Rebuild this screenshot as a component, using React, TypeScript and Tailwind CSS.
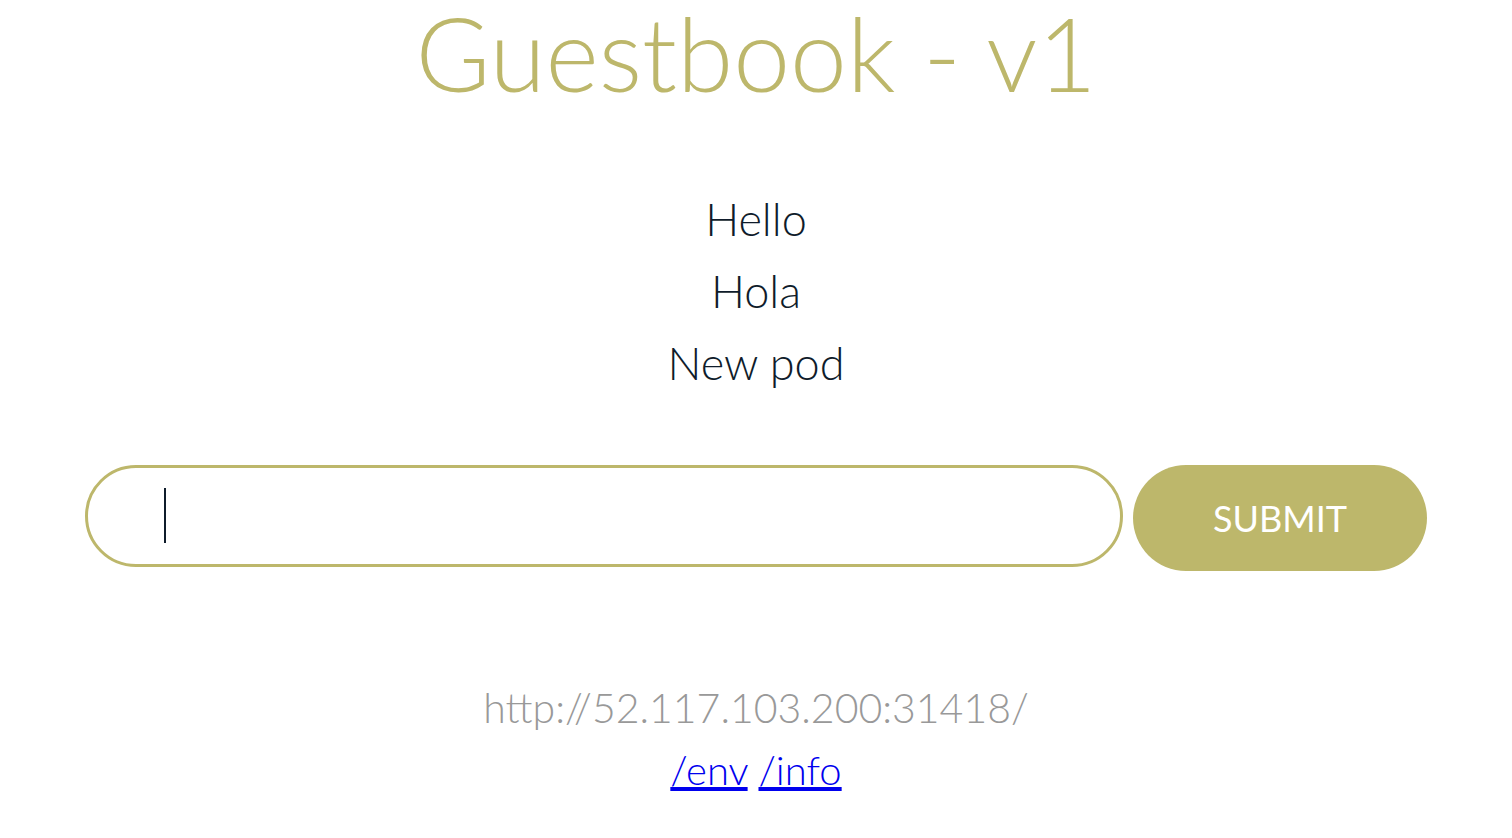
import React, { useState } from 'react';

const messages = ['Hello', 'Hola', 'New pod'];

const App: React.FC = () => {
  const [entry, setEntry] = useState('');

  return (
    <div className="min-h-screen bg-white text-center font-['Lato','Open_Sans',sans-serif]">
      <h1 className="pt-[3px] text-[102px] leading-[100px] font-light text-[#bdb76b]">Guestbook - v1</h1>

      <div className="mt-[80px] flex flex-col text-[45px] leading-[72px] font-light text-[#0f1c2b]">
        {messages.map((m) => (
          <p key={m}>{m}</p>
        ))}
      </div>

      <form
        className="mt-[66px] flex items-start gap-[10px] px-[85px]"
        onSubmit={(e) => {
          e.preventDefault();
        }}
      >
        <div className="relative flex-1">
          <input
            type="text"
            value={entry}
            onChange={(e) => setEntry(e.target.value)}
            className="block h-[102px] w-full rounded-full border-[3px] border-[#bdb76b] px-[78px] text-[40px] text-[#0f1c2b] caret-[#0f1c2b] outline-none"
          />
          {entry === '' && (
            <span className="pointer-events-none absolute left-[79px] top-[23px] h-[55px] w-[2px] bg-[#0f1c2b]" />
          )}
        </div>
        <button
          type="submit"
          className="h-[106px] w-[294px] rounded-full bg-[#bdb76b] text-[36px] font-normal text-white"
        >
          SUBMIT
        </button>
      </form>

      <div className="mt-[105px] text-[41px] leading-[64px] font-light text-[#999999]">
        http://52.117.103.200:31418/
      </div>
      <div className="text-[40px] leading-[60px] font-light">
        <a href="#env" className="text-[#0000ee] underline">/env</a>{' '}
        <a href="#info" className="text-[#0000ee] underline">/info</a>
      </div>
    </div>
  );
};

export default App;
